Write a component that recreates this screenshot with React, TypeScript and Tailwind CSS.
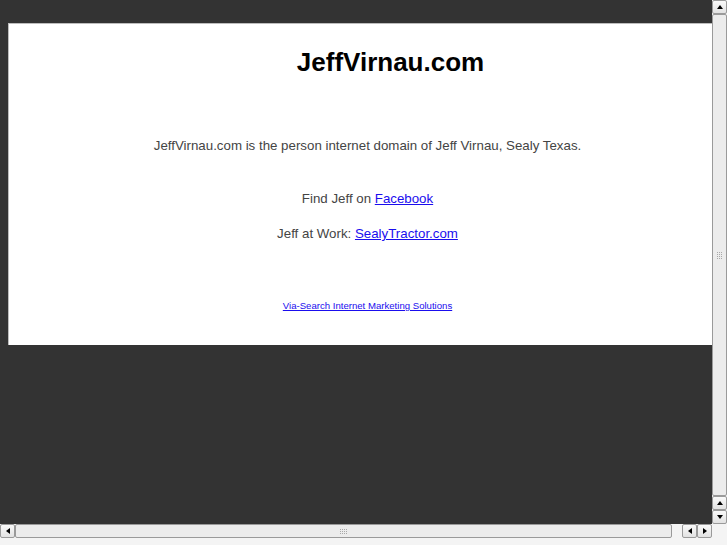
import React from 'react';

const font = { fontFamily: '"Liberation Sans", Arial, sans-serif' };

function Arrow({ dir }: { dir: 'up' | 'down' | 'left' | 'right' }) {
  const pts = {
    up: '1,6 4,2 7,6',
    down: '1,2 4,6 7,2',
    left: '6,1 2,4 6,7',
    right: '2,1 6,4 2,7',
  }[dir];
  return (
    <svg width="8" height="8" viewBox="0 0 8 8">
      <polygon points={pts} fill="#000" />
    </svg>
  );
}

function ScrollButton({ dir }: { dir: 'up' | 'down' | 'left' | 'right' }) {
  return (
    <div className="flex h-[14px] w-[15px] shrink-0 items-center justify-center rounded-[2px] border border-[#9a9a9a] bg-gradient-to-b from-[#fafafa] to-[#e2e2e2]">
      <Arrow dir={dir} />
    </div>
  );
}

function Grip({ vertical }: { vertical?: boolean }) {
  const dots = Array.from({ length: 12 });
  return (
    <div className={`grid gap-[1px] ${vertical ? 'grid-cols-3' : 'grid-cols-4'}`}>
      {dots.map((_, i) => (
        <div key={i} className="h-[1px] w-[1px] bg-[#a8a8a8]" />
      ))}
    </div>
  );
}

export default function App() {
  return (
    <div className="flex h-[545px] w-[727px] flex-col overflow-hidden bg-[#f4f4f4]" style={font}>
      <div className="flex h-[524px]">
        <div className="w-[712px] bg-[#333333] pl-[8px] pt-[23px]">
          <div className="flex h-[322px] flex-col items-center border-l border-t border-[#bdbdbd] bg-white pl-[14px] text-[13.3px] leading-[16px] text-[#444]">
            <h1 className="mt-[23px] pl-[46px] text-[26px] font-bold leading-[30px] text-black">JeffVirnau.com</h1>
            <p className="mt-[61px]">JeffVirnau.com is the person internet domain of Jeff Virnau, Sealy Texas.</p>
            <p className="mt-[37px]">
              Find Jeff on <a href="#" className="text-[#1a0dee] underline">Facebook</a>
            </p>
            <p className="mt-[19px]">
              Jeff at Work: <a href="#" className="text-[#1a0dee] underline">SealyTractor.com</a>
            </p>
            <a href="#" className="mt-[58px] text-[9.6px] leading-[12px] text-[#1a0dee] underline">
              Via-Search Internet Marketing Solutions
            </a>
          </div>
        </div>
        <div className="flex w-[15px] flex-col bg-[#f0f0f0]">
          <ScrollButton dir="up" />
          <div className="flex flex-1 items-center justify-center rounded-[2px] border border-[#9a9a9a] bg-[#ececec]">
            <Grip vertical />
          </div>
          <ScrollButton dir="up" />
          <ScrollButton dir="down" />
        </div>
      </div>
      <div className="flex h-[14px] w-[712px]">
        <ScrollButton dir="left" />
        <div className="flex flex-1 items-center justify-center rounded-[2px] border border-[#9a9a9a] bg-[#ececec]">
          <Grip />
        </div>
        <div className="w-[10px] bg-[#f4f4f4]" />
        <ScrollButton dir="left" />
        <ScrollButton dir="right" />
      </div>
    </div>
  );
}
